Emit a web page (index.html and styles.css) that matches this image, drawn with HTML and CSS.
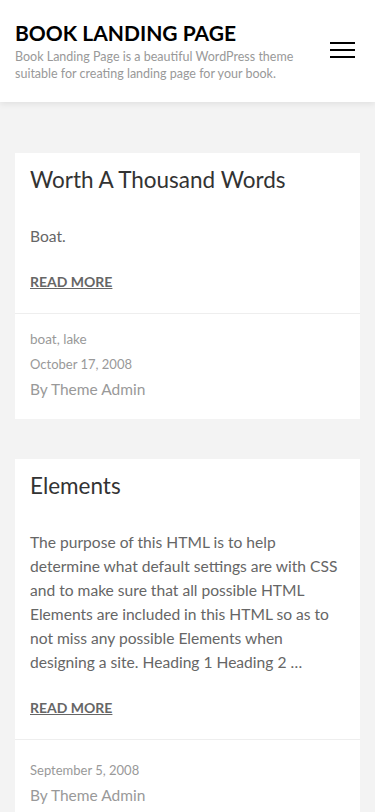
FILE: index.html
```html
<!DOCTYPE html>
<html lang="en">
<head>
    <meta charset="UTF-8">
    <meta name="viewport" content="width=device-width, initial-scale=1.0">
    <title>Book Landing Page</title>
    <link rel="stylesheet" href="styles.css">
</head>
<body>
    <header class="site-header">
        <div class="branding">
            <div class="site-title">BOOK LANDING PAGE</div>
            <p class="site-description">Book Landing Page is a beautiful WordPress theme suitable for creating landing page for your book.</p>
        </div>
        <button class="menu-toggle" aria-label="Menu">
            <span></span><span></span><span></span>
        </button>
    </header>
    <main class="content">
        <article class="post">
            <div class="post-body">
                <h2 class="entry-title">Worth A Thousand Words</h2>
                <p class="excerpt">Boat.</p>
                <a class="read-more" href="#">READ MORE</a>
            </div>
            <footer class="entry-meta">
                <div class="tags"><a href="#">boat</a>, <a href="#">lake</a></div>
                <div class="date">October 17, 2008</div>
                <div class="author">By Theme Admin</div>
            </footer>
        </article>
        <article class="post">
            <div class="post-body">
                <h2 class="entry-title">Elements</h2>
                <p class="excerpt">The purpose of this HTML is to help determine what default settings are with CSS and to make sure that all possible HTML Elements are included in this HTML so as to not miss any possible Elements when designing a site. Heading 1 Heading 2 &hellip;</p>
                <a class="read-more" href="#">READ MORE</a>
            </div>
            <footer class="entry-meta no-tags">
                <div class="date">September 5, 2008</div>
                <div class="author">By Theme Admin</div>
            </footer>
        </article>
    </main>
</body>
</html>
```

FILE: styles.css
```css
body {
    margin: 0;
    font-family: Lato, "Open Sans", sans-serif;
    background: #f3f3f3;
    color: #555;
}

.site-header {
    background: #fff;
    box-shadow: 0 2px 6px rgba(0,0,0,0.08);
    display: flex;
    align-items: center;
    justify-content: space-between;
    padding: 19px 20px 20px 15px;
}
.site-title {
    font-size: 21px;
    font-weight: bold;
    color: #000;
    line-height: 28px;
}
.site-description {
    margin: 1px 0 0;
    font-size: 12.5px;
    line-height: 17px;
    color: #999;
    max-width: 290px;
}
.menu-toggle {
    background: none;
    border: 0;
    padding: 0;
    width: 25px;
    display: flex;
    flex-direction: column;
    gap: 5px;
    margin-bottom: 2px;
}
.menu-toggle span {
    display: block;
    height: 2px;
    background: #000;
}

.content {
    padding: 51px 15px 0;
}
.post {
    background: #fff;
    margin-bottom: 40px;
}
.post-body {
    padding: 12px 15px 23px;
}
.entry-title {
    margin: 0 0 29px;
    font-size: 22.5px;
    font-weight: normal;
    color: #333;
    line-height: 30px;
}
.excerpt {
    margin: 0 0 23px;
    font-size: 15.6px;
    line-height: 24px;
    color: #666;
}
.read-more {
    font-size: 14px;
    font-weight: bold;
    color: #666;
    text-decoration: underline;
}
.entry-meta {
    border-top: 1px solid #eee;
    padding: 13px 15px 17px;
    color: #999;
}
.entry-meta.no-tags {
    padding-top: 18px;
}
.tags, .date {
    font-size: 13px;
    line-height: 25px;
}
.tags {
    font-size: 13.5px;
}
.tags a {
    color: #999;
    text-decoration: none;
}
.author {
    font-size: 15.5px;
    line-height: 25px;
}
```
